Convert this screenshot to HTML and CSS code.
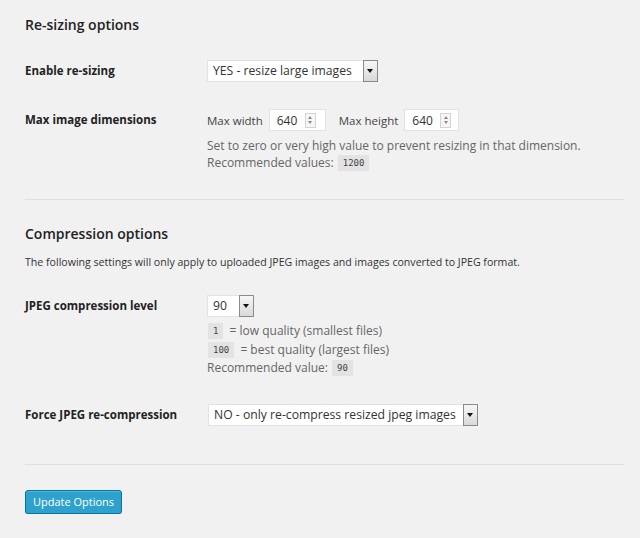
FILE: index.html
```html
<!DOCTYPE html>
<html>
<head>
<meta charset="utf-8">
<link rel="stylesheet" href="styles.css">
</head>
<body>
<div class="wrap">
  <h3 class="section-title">Re-sizing options</h3>

  <div class="row row-first">
    <div class="th">Enable re-sizing</div>
    <div class="td">
      <div class="select sel-resize"><span class="sel-text">YES - resize large images</span><span class="sel-arrow"></span></div>
    </div>
  </div>

  <div class="row row-dims">
    <div class="th">Max image dimensions</div>
    <div class="td">
      <div class="dims">
        <span class="dim-label">Max width</span>
        <div class="num num-w"><span>640</span><span class="spin"><i class="up"></i><i class="down"></i></span></div>
        <span class="dim-label dim-gap">Max height</span>
        <div class="num num-h"><span>640</span><span class="spin"><i class="up"></i><i class="down"></i></span></div>
      </div>
      <div class="desc">
        <div class="dline">Set to zero or very high value to prevent resizing in that dimension.</div>
        <div class="dline">Recommended values: <code>1200</code></div>
      </div>
    </div>
  </div>

  <hr class="sep sep-1">

  <h3 class="section-title title-2">Compression options</h3>
  <p class="intro">The following settings will only apply to uploaded JPEG images and images converted to JPEG format.</p>

  <div class="row row-quality">
    <div class="th">JPEG compression level</div>
    <div class="td">
      <div class="select sel-quality"><span class="sel-text">90</span><span class="sel-arrow"></span></div>
      <div class="qlines">
        <div class="qline"><code>1</code> = low quality (smallest files)</div>
        <div class="qline"><code>100</code> = best quality (largest files)</div>
        <div class="qline">Recommended value: <code>90</code></div>
      </div>
    </div>
  </div>

  <div class="row row-force">
    <div class="th">Force JPEG re-compression</div>
    <div class="td">
      <div class="select sel-force"><span class="sel-text">NO - only re-compress resized jpeg images</span><span class="sel-arrow"></span></div>
    </div>
  </div>

  <hr class="sep sep-2">

  <button class="button-primary">Update Options</button>
</div>
</body>
</html>
```

FILE: styles.css
```css
html, body {
  margin: 0;
  padding: 0;
  background: #f1f1f1;
}
body {
  font-family: "Open Sans", "Liberation Sans", sans-serif;
  font-size: 11px;
  color: #444;
}
.wrap {
  padding: 15px 16px 0 25px;
}
.section-title {
  margin: 0;
  font-size: 14px;
  line-height: 19px;
  font-weight: 600;
  color: #222;
}
.row {
  display: flex;
  align-items: flex-start;
}
.th {
  width: 182px;
  flex: none;
  font-weight: 700;
  font-size: 11.5px;
  color: #222;
  line-height: 22px;
}
.td {
  flex: 1;
}
.row-first { margin-top: 26px; }
.row-dims { margin-top: 27px; }
.row-quality { margin-top: 24px; }
.row-force { margin-top: 26px; }

/* select */
.select {
  display: flex;
  align-items: stretch;
  height: 22px;
  box-sizing: border-box;
  background: #fff;
  border: 1px solid #e2e2e2;
  color: #333;
  line-height: 20px;
}
.sel-text {
  flex: 1;
  padding-left: 5px;
  white-space: nowrap;
  font-size: 12.2px;
}
.sel-arrow {
  width: 13px;
  flex: none;
  border: 1px solid #8a8a8a;
  margin: -1px -1px -1px 0;
  background: linear-gradient(#f6f6f6, #d9d9d9);
  position: relative;
}
.sel-arrow::after {
  content: "";
  position: absolute;
  left: 3px;
  top: 8px;
  border-left: 3.5px solid transparent;
  border-right: 3.5px solid transparent;
  border-top: 4px solid #111;
}
.sel-resize { width: 171px; }
.sel-quality { width: 47px; }
.sel-force { width: 270px; margin-left: 1px; }

/* dimensions */
.dims {
  display: flex;
  align-items: center;
  height: 22px;
}
.dim-label {
  color: #444;
  font-size: 11.5px;
  margin-right: 6px;
}
.dim-gap { margin-left: 13px; }
.num {
  display: flex;
  align-items: center;
  height: 22px;
  box-sizing: border-box;
  background: #fff;
  border: 1px solid #e2e2e2;
  color: #333;
  font-size: 12px;
  padding-left: 7px;
}
.num-w { width: 57px; }
.num-h { width: 55px; }
.num span:first-child { width: 28px; }
.spin {
  width: 11px;
  height: 15px;
  border: 1px solid #d4d4d4;
  background: #f6f6f6;
  box-sizing: border-box;
  display: flex;
  flex-direction: column;
  align-items: center;
  justify-content: space-around;
  padding: 1px 0;
}
.spin i {
  display: block;
  width: 0;
  height: 0;
  border-left: 2.5px solid transparent;
  border-right: 2.5px solid transparent;
}
.spin .up { border-bottom: 3px solid #888; }
.spin .down { border-top: 3px solid #888; }

.desc {
  margin-top: 6px;
  color: #666;
  font-size: 12px;
}
.dline {
  height: 17px;
  line-height: 17px;
}
code {
  display: inline-block;
  font-family: "DejaVu Sans Mono", "Liberation Mono", monospace;
  font-size: 9px;
  line-height: 16px;
  height: 16px;
  vertical-align: top;
  background: #e3e3e3;
  color: #444;
  padding: 0 5px;
  margin: 0 1px;
}
.dline code { margin-top: 1px; }

.sep {
  border: 0;
  border-top: 1px solid #dedede;
  margin: 0;
  height: 0;
}
.sep-1 { margin-top: 28px; }
.sep-2 { margin-top: 38px; }

.title-2 { margin-top: 24px; }
.intro {
  margin: 11px 0 0;
  line-height: 17px;
  font-size: 10.6px;
  color: #333;
}

.qlines {
  margin-top: 5px;
  color: #666;
  font-size: 12px;
}
.qline {
  height: 18.5px;
  line-height: 18.5px;
}
.qline code { margin-top: 1px; margin-right: 3px; }

.button-primary {
  display: block;
  margin-top: 25px;
  width: 97px;
  height: 24px;
  padding: 0;
  background: #2ea2cc;
  border: 1px solid #0074a2;
  border-radius: 3px;
  box-shadow: inset 0 1px 0 rgba(120, 200, 230, 0.5), 0 1px 0 rgba(0, 0, 0, 0.15);
  color: #fff;
  font-family: "Open Sans", "Liberation Sans", sans-serif;
  font-size: 11px;
  cursor: pointer;
}
```
